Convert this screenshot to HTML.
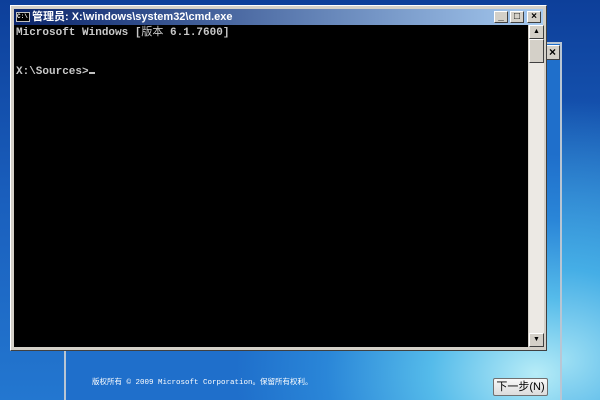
<!DOCTYPE html>
<html><head><meta charset="utf-8"><style>
*{margin:0;padding:0;box-sizing:border-box}
html,body{width:600px;height:400px;overflow:hidden}
body{position:relative;font-family:"Liberation Sans","Noto Sans CJK SC",sans-serif;
background:radial-gradient(ellipse 320px 260px at 560px 360px,#9fe0f4 0%,#45aee6 35%,rgba(30,110,200,0) 100%),linear-gradient(180deg,#0d3f9a 0%,#1a5fbd 50%,#2377d0 100%);}
.setup{position:absolute;left:64px;top:42px;width:498px;height:358px;border:2px solid #b9c6d4;border-bottom:none;
background:radial-gradient(ellipse 300px 220px at 470px 330px,#b7ecf7 0%,#55bbea 35%,#2a86d8 70%,#1f6fcb 100%);}
.sclose{position:absolute;left:545px;top:45px;width:15px;height:15px;background:#d4d0c8;border:1px solid #fff;border-right-color:#404040;border-bottom-color:#404040;font-size:12px;font-weight:bold;line-height:12px;text-align:center;color:#000}
.cmd{position:absolute;left:10px;top:5px;width:537px;height:346px;background:#d4d0c8;border:1px solid #fff;border-right-color:#404040;border-bottom-color:#404040}
.title{position:absolute;left:3px;top:3px;right:3px;height:16px;background:linear-gradient(90deg,#0a246a,#a6caf0);color:#fff;font-size:11px;font-weight:bold;line-height:16px;padding-left:18px}
.ico{position:absolute;left:2px;top:3px;width:14px;height:10px;background:#000;border:1px solid #c0c0c0;color:#fff;font-size:6px;line-height:8px;font-family:"Liberation Mono",monospace}
.btn{position:absolute;top:2px;width:14px;height:12px;background:#d4d0c8;border:1px solid #fff;border-right-color:#404040;border-bottom-color:#404040;color:#000;font-size:10px;line-height:10px;text-align:center;font-weight:bold}
.con{position:absolute;left:3px;top:19px;width:514px;height:322px;background:#000;color:#c8c8c8;font-family:"Liberation Mono","Noto Sans CJK SC",monospace;font-size:11px;line-height:13px;padding:2px 2px;font-weight:bold}
.sb{position:absolute;left:518px;top:19px;width:15px;height:322px;background:#ece9e4}
.sbb{position:absolute;left:0;width:15px;background:#d4d0c8;border:1px solid #fff;border-right-color:#404040;border-bottom-color:#404040;font-size:7px;text-align:center;line-height:12px}
.copy{position:absolute;left:92px;top:376px;color:#fff;font-size:7.5px;font-family:"Liberation Mono","Noto Sans CJK SC",monospace}
.next{position:absolute;left:493px;top:378px;width:55px;height:18px;background:linear-gradient(#f8f8f8,#dcdcdc);border:1px solid #707070;border-radius:2px;font-size:11px;text-align:center;line-height:16px;color:#000}
</style></head><body>
<div class="setup"></div>
<div class="sclose">×</div>
<div class="cmd">
 <div class="title"><div class="ico">C:\</div>管理员: X:\windows\system32\cmd.exe
  <div class="btn" style="right:35px">_</div><div class="btn" style="right:19px">□</div><div class="btn" style="right:2px">×</div>
 </div>
 <div class="con">Microsoft Windows [<span style="font-weight:normal">版本</span> 6.1.7600]<br><br><br>X:\Sources&gt;<span style="display:inline-block;width:6px;height:2px;background:#c0c0c0"></span></div>
 <div class="sb"><div class="sbb" style="top:0;height:14px">▲</div><div class="sbb" style="top:14px;height:24px"></div><div class="sbb" style="bottom:0;height:14px">▼</div></div>
</div>
<div class="copy">版权所有 © 2009 Microsoft Corporation。保留所有权利。</div>
<div class="next">下一步(N)</div>
</body></html>
